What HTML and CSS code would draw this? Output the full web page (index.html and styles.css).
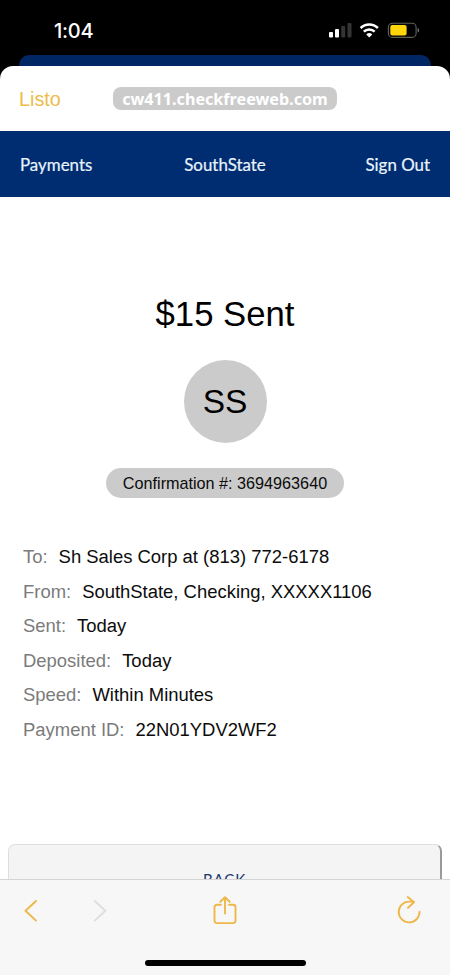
FILE: index.html
```html
<!DOCTYPE html>
<html lang="en">
<head>
<meta charset="utf-8">
<title>Payment sent</title>
<link rel="stylesheet" href="styles.css">
</head>
<body>
<div class="phone">
  <div class="status">
    <span class="time">1:04</span>
    <svg class="indicators" width="94" height="20" viewBox="0 0 94 20">
      <g fill="#fff"><rect x="1" y="12" width="4" height="5.500" rx="1"/><rect x="7" y="9" width="4" height="8.500" rx="1"/></g>
      <g fill="#343434"><rect x="13.200" y="6" width="4" height="11.500" rx="1"/><rect x="19.500" y="3" width="4" height="14.500" rx="1"/></g>
      <g fill="none" stroke="#fff" stroke-width="2.500"><path d="M32.600 8a12.400 12.400 0 0 1 17.300 0"/><path d="M35.800 11.600a7.900 7.900 0 0 1 10.900 0"/></g>
      <path d="M41.250 17.500l-3-3.100a4.300 4.300 0 0 1 6 0z" fill="#fff"/>
      <rect x="60.400" y="3.200" width="27.700" height="14.200" rx="4" fill="none" stroke="#626257" stroke-width="1.100"/>
      <rect x="62.300" y="5" width="16.300" height="10.500" rx="2" fill="#ffd60a"/>
      <path d="M89.600 8c2 .6 2 4 0 4.600z" fill="#777"/>
    </svg>
  </div>
  <div class="backdrop"></div>
  <div class="sheet">
    <header class="browser">
      <span class="done">Listo</span>
      <span class="url">cw411.checkfreeweb.com</span>
    </header>
    <nav class="nav">
      <span class="nav-left">Payments</span><span class="nav-title">SouthState</span><span class="nav-right">Sign Out</span>
    </nav>
    <main class="content">
      <h1 class="amount">$15 Sent</h1>
      <div class="avatar">SS</div>
      <div class="confirm">Confirmation #: 3694963640</div>
      <dl class="details">
        <div class="row"><dt>To:</dt><dd>Sh Sales Corp at (813) 772-6178</dd></div>
        <div class="row"><dt>From:</dt><dd>SouthState, Checking, XXXXX1106</dd></div>
        <div class="row"><dt>Sent:</dt><dd>Today</dd></div>
        <div class="row"><dt>Deposited:</dt><dd>Today</dd></div>
        <div class="row"><dt>Speed:</dt><dd>Within Minutes</dd></div>
        <div class="row"><dt>Payment ID:</dt><dd>22N01YDV2WF2</dd></div>
      </dl>
      <div class="back"><span>BACK</span></div>
    </main>
    <footer class="toolbar">
      <div class="tools">
        <svg width="14" height="24" viewBox="0 0 14 24"><path d="M13 2L2.500 11.800 13 21.600" class="line"/></svg>
        <svg class="forward" width="14" height="24" viewBox="0 0 14 24"><path d="M1.800 2L12.300 11.800 1.800 21.600" class="line"/></svg>
        <svg class="share" width="24" height="30" viewBox="0 0 24 30"><path d="M8 8.700H4A2.500 2.500 0 0 0 1.500 11.200V24.600A2.500 2.500 0 0 0 4 27.100H20A2.500 2.500 0 0 0 22.500 24.600V11.200A2.500 2.500 0 0 0 20 8.700H16M12 17.500V1.500M7.300 5.800L12 1.200l4.700 4.600" class="line"/></svg>
        <svg width="24" height="30" viewBox="0 0 24 30"><path d="M22.500 15.800A10.400 10.400 0 1 1 12.100 5.600H17M10.800 1L17 6.200 11 11.800" class="line"/></svg>
      </div>
      <div class="home"></div>
    </footer>
  </div>
</div>
</body>
</html>
```

FILE: styles.css
```css
* { box-sizing: border-box; }
body { margin: 0; background: #000; font-family: "Liberation Sans", Arial, sans-serif; color: #0c0c0c; }
.phone { width: 450px; height: 975px; display: flex; flex-direction: column; overflow: hidden; background: #000; }
.status { height: 55px; flex: none; display: flex; justify-content: space-between; align-items: flex-start; padding: 20px 28px 0 54px; color: #fff; }
.time { font: 500 20px/22px Inter, sans-serif; letter-spacing: -0.3px; }
.indicators { flex: none; }
.backdrop { height: 11px; flex: none; margin: 0 19px; border-radius: 10px 10px 0 0; background: #002663; }
.sheet { flex: 1; min-height: 0; display: flex; flex-direction: column; border-radius: 13px 13px 0 0; background: #fff; overflow: hidden; }
.browser { height: 65px; flex: none; display: grid; grid-template-columns: 1fr auto 1fr; align-items: center; padding: 0 19px; }
.done { font-size: 19.800px; line-height: 24px; color: #edbc4b; }
.url { height: 23px; padding: 0 9px; border-radius: 8px; background: #cbcbcb; color: #fff; font: bold 16.150px/24px "Noto Sans", sans-serif; white-space: nowrap; }
.nav { height: 66px; flex: none; display: grid; grid-template-columns: 1fr auto 1fr; align-items: center; padding: 2px 20px 0; background: #002d72; color: #e9f4fc; font: 16.900px/24px Lato, sans-serif; -webkit-text-stroke: 0.2px #e9f4fc; }
.nav-right { text-align: right; }
.content { flex: 1; min-height: 0; display: flex; flex-direction: column; align-items: center; overflow: hidden; }
.amount { margin: 97px 0 0; font-size: 34.700px; font-weight: 400; line-height: 40px; color: #000; }
.avatar { flex: none; margin-top: 26px; width: 83px; height: 83px; border-radius: 50%; background: #cbcbcb; display: grid; place-items: center; font-size: 33.500px; color: #000; }
.confirm { flex: none; margin-top: 25px; width: 238px; height: 30px; border-radius: 15px; background: #cbcbcb; text-align: center; font-size: 16.200px; line-height: 30px; }
.details { flex: none; align-self: stretch; margin: 41px 0 0; padding-left: 23px; font-size: 18.450px; }
.row { display: flex; gap: 11px; height: 34.600px; line-height: 35px; white-space: nowrap; }
dt { color: #7b7b7b; }
dd { margin: 0; }
.back { flex: none; margin-top: 97px; width: 434px; height: 70px; border: 1px solid #dedede; border-right: 2px solid #9a9a9a; border-radius: 7px; background: #f4f4f4; text-align: center; color: #17376d; font: 15px/68px Lato, sans-serif; letter-spacing: 0.900px; }
.toolbar { height: 96px; flex: none; border-top: 1px solid #d4d4d4; background: #f7f7f7; display: flex; flex-direction: column; align-items: center; }
.tools { align-self: stretch; display: flex; align-items: center; height: 62px; padding: 0 29px 0 23px; }
.forward { margin-left: 56px; }
.share { margin: 0 160px 0 106px; }
.tools svg { flex: none; }
.line { fill: none; stroke: #edb84b; stroke-width: 1.900; stroke-linecap: round; stroke-linejoin: round; }
.forward .line { stroke: #dedede; }
.home { margin-top: 18px; width: 161px; height: 6px; border-radius: 3px; background: #000; }
```
